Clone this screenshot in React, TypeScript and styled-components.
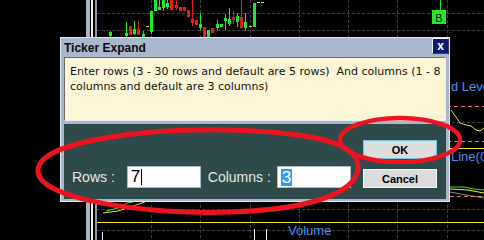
import React from "react";
import styled, { createGlobalStyle } from "styled-components";

const GlobalStyle = createGlobalStyle`
  html, body {
    margin: 0;
    padding: 0;
    background: #000;
  }
  body {
    font-family: "Liberation Sans", Arial, sans-serif;
  }
`;

type Candle = { x: number; top: number; bottom: number; up: boolean; hi?: number; lo?: number };

const candles: Candle[] = [
  { x: 109, top: 32, bottom: 36, up: true, hi: 31, lo: 37 },
  { x: 125, top: 33, bottom: 36, up: true, hi: 22, lo: 37 },
  { x: 129, top: 26, bottom: 35, up: false },
  { x: 133, top: 29, bottom: 34, up: true, hi: 21, lo: 35 },
  { x: 137, top: 29, bottom: 35, up: false, hi: 21 },
  { x: 142, top: 34, bottom: 37, up: true, hi: 31 },
  { x: 150, top: 11, bottom: 32, up: true, lo: 34 },
  { x: 154, top: 0, bottom: 11, up: true },
  { x: 158, top: 7, bottom: 10, up: true, hi: 0 },
  { x: 162, top: 0, bottom: 8, up: true, lo: 11 },
  { x: 166, top: 3, bottom: 7, up: true, hi: 0, lo: 9 },
  { x: 170, top: 0, bottom: 10, up: false },
  { x: 175, top: 5, bottom: 8, up: false, hi: 0, lo: 10 },
  { x: 179, top: 7, bottom: 11, up: false },
  { x: 183, top: 7, bottom: 11, up: false },
  { x: 187, top: 10, bottom: 17, up: false },
  { x: 191, top: 19, bottom: 23, up: false, hi: 0, lo: 26 },
  { x: 195, top: 20, bottom: 25, up: false },
  { x: 199, top: 24, bottom: 28, up: true, hi: 13, lo: 30 },
  { x: 203, top: 27, bottom: 38, up: false },
  { x: 207, top: 30, bottom: 38, up: true },
  { x: 211, top: 28, bottom: 33, up: false },
  { x: 216, top: 24, bottom: 28, up: true, hi: 20, lo: 30 },
  { x: 220, top: 24, bottom: 27, up: true },
  { x: 224, top: 18, bottom: 21, up: true, hi: 14, lo: 30 },
  { x: 228, top: 19, bottom: 24, up: true, hi: 8, lo: 26 },
  { x: 232, top: 17, bottom: 20, up: false, hi: 11, lo: 24 },
  { x: 236, top: 16, bottom: 22, up: true, hi: 13, lo: 27 },
  { x: 240, top: 17, bottom: 28, up: false, hi: 0 },
  { x: 244, top: 22, bottom: 28, up: true, hi: 13, lo: 31 },
  { x: 253, top: 3, bottom: 27, up: true },
];

const yellowTicks = [
  [146, 26],
  [249, 26],
  [257, 2],
  [261, 2],
];

const gridX = [151, 200, 250, 299, 348, 397, 447];
const gridY = [13, 30, 122, 209, 230];

const Screen = styled.div`
  position: relative;
  display: flex;
  width: 484px;
  height: 240px;
  overflow: hidden;
  background: #000;
`;

const SidePane = styled.div`
  flex: none;
  width: 86px;
  background: #000;
`;

const Splitter = styled.div`
  flex: none;
  width: 11px;
  background: linear-gradient(
    to right,
    #a6b2c6 0 4px,
    #000 4px 5px,
    #eef0f4 5px 7px,
    #000 7px 9px,
    #8e98a8 9px 11px
  );
`;

const ChartPane = styled.svg`
  display: block;
  flex: 1;
  height: 240px;
  font-family: "Liberation Sans", Arial, sans-serif;
`;

const Dialog = styled.div`
  position: absolute;
  left: 60px;
  top: 37px;
  width: 390px;
  height: 165px;
  box-sizing: border-box;
  display: flex;
  flex-direction: column;
  padding: 0 3px 2px;
  background: #a9b7cf;
  border: 1px solid #e2e6ee;
`;

const TitleBar = styled.div`
  display: flex;
  justify-content: space-between;
  align-items: flex-start;
  height: 19px;
  flex: none;
`;

const Title = styled.span`
  margin-top: 3px;
  font-size: 12px;
  font-weight: bold;
  color: #0a0a0a;
`;

const CloseButton = styled.div`
  display: flex;
  align-items: center;
  justify-content: center;
  width: 15px;
  height: 14px;
  margin-right: -3px;
  background: #0c1a74;
  border: 1px solid;
  border-color: #f4f6fa #303a70 #303a70 #f4f6fa;
  color: #fff;
  font-size: 12px;
  font-weight: bold;
  line-height: 1;
`;

const Message = styled.div`
  box-sizing: border-box;
  height: 64px;
  flex: none;
  padding: 6px 5px;
  background: #fdf6d6;
  border: 1px solid;
  border-color: #6c6c6c #efefef #efefef #6c6c6c;
  font-family: "DejaVu Sans", Verdana, sans-serif;
  font-size: 11px;
  line-height: 15px;
  white-space: nowrap;
  color: #111;
`;

const ActionPanel = styled.div`
  display: flex;
  align-items: flex-end;
  height: 75px;
  margin-top: 3px;
  box-sizing: border-box;
  padding: 0 9px 11px 8px;
  background: #2f4a4a;
`;

const Fields = styled.div`
  display: flex;
  align-items: center;
  height: 22px;
`;

const Label = styled.span<{ $gap: number }>`
  margin-right: ${(p) => p.$gap}px;
  font-size: 14px;
  color: #e6e8e8;
`;

const Field = styled.div<{ $gap?: number }>`
  display: flex;
  align-items: center;
  box-sizing: border-box;
  width: 74px;
  height: 22px;
  margin-right: ${(p) => p.$gap ?? 0}px;
  padding-left: 3px;
  background: #fff;
  border: 1px solid #a8bcd2;
  font-size: 17px;
  color: #000;
`;

const Caret = styled.span`
  display: inline-block;
  width: 1px;
  height: 16px;
  margin-left: 1px;
  background: #000;
`;

const Selected = styled.span`
  padding: 0 1px;
  line-height: 17px;
  background: #3399ff;
  color: #fff;
`;

const ButtonStack = styled.div`
  display: flex;
  flex-direction: column;
  gap: 10px;
  margin-left: auto;
`;

const Button = styled.div<{ $default?: boolean }>`
  display: flex;
  align-items: center;
  justify-content: center;
  box-sizing: border-box;
  width: 74px;
  height: 19px;
  background: #dcdcdc;
  border: 1px solid ${(p) => (p.$default ? "#74c4ee" : "#f6f6f6")};
  box-shadow: ${(p) => (p.$default ? "inset 0 0 0 1px #c4e4f6" : "none")};
  font-size: 11px;
  font-weight: bold;
  color: #000;
`;

const Markup = styled.svg`
  position: absolute;
  left: 0;
  top: 0;
  pointer-events: none;
`;

function Chart() {
  return (
    <ChartPane viewBox="97 0 387 240" width={387} height={240}>
      {gridY.map((y) => (
        <line key={`h${y}`} x1={97} x2={484} y1={y + 0.5} y2={y + 0.5} stroke="#3c3c3c" strokeDasharray="3 2" />
      ))}
      {gridX.map((x) => (
        <line key={`v${x}`} x1={x + 0.5} x2={x + 0.5} y1={0} y2={240} stroke="#3c3c3c" strokeDasharray="3 2" />
      ))}

      {candles.map((c) => {
        const color = c.up ? "#1ee82a" : "#e81a1a";
        return (
          <g key={c.x} fill={color}>
            {c.hi !== undefined && <rect x={c.x + 1} y={c.hi} width={1} height={c.top - c.hi} />}
            {c.lo !== undefined && <rect x={c.x + 1} y={c.bottom} width={1} height={c.lo - c.bottom} />}
            <rect x={c.x} y={c.top} width={3} height={c.bottom - c.top} />
          </g>
        );
      })}
      <rect x={241} y={0} width={1} height={6} fill="#e81a1a" />
      {yellowTicks.map(([x, y]) => (
        <rect key={`${x}-${y}`} x={x} y={y} width={3} height={1} fill="#f0e020" />
      ))}

      <rect x={440} y={0} width={1} height={10} fill="#1ee82a" />
      <rect x={432} y={10} width={14} height={14} fill="#1ee82a" />
      <text x={439} y={21.5} fontSize={11} textAnchor="middle" fill="#000">
        B
      </text>

      <text x={451} y={91} fontSize={13} fill="#4a90e8">
        d Level
      </text>
      <line x1={97} x2={484} y1={106.5} y2={106.5} stroke="#e07878" strokeDasharray="4 3" />
      <polyline points="451,110 456,117 460,123 466,125 471,126 476,130 480,131 484,128" fill="none" stroke="#e8e020" />
      <line x1={97} x2={484} y1={141.5} y2={141.5} stroke="#e07878" strokeDasharray="4 3" />
      <line x1={97} x2={484} y1={148.5} y2={148.5} stroke="#f0e818" />
      <text x={451} y={161} fontSize={13} fill="#4a90e8">
        Line(0)
      </text>

      <polyline points="450,187 464,187 474,189 484,190" fill="none" stroke="#5ad82a" />
      <polyline points="450,189 468,190 484,193" fill="none" stroke="#e8f020" />
      <polyline points="450,192 466,195 484,198" fill="none" stroke="#8a8a8a" />
      <line x1={450} x2={484} y1={196.5} y2={196.5} stroke="#e07878" strokeDasharray="4 3" />

      <polyline points="103,213 118,211 130,207 145,202" fill="none" stroke="#e8e020" />
      <polyline points="106,211 118,208 127,203 133,202" fill="none" stroke="#5ad82a" />

      <line x1={97} x2={484} y1={222.5} y2={222.5} stroke="#f0e818" />
      <text x={288} y={235} fontSize={13} fill="#4a90e8">
        Volume
      </text>
      <rect x={102} y={232} width={1} height={8} fill="#f0f0f0" />
      <rect x={254} y={229} width={1} height={11} fill="#f0f0f0" />
      <rect x={266} y={229} width={1} height={11} fill="#f0f0f0" />
    </ChartPane>
  );
}

export default function App() {
  return (
    <>
      <GlobalStyle />
      <Screen>
        <SidePane />
        <Splitter />
        <Chart />

        <Dialog>
          <TitleBar>
            <Title>Ticker Expand</Title>
            <CloseButton>x</CloseButton>
          </TitleBar>
          <Message>
            Enter rows (3 - 30 rows and default are 5 rows){"\u00a0 "}And columns (1 - 8
            <br />
            columns and default are 3 columns)
          </Message>
          <ActionPanel>
            <Fields>
              <Label $gap={12}>Rows :</Label>
              <Field $gap={7}>
                7<Caret />
              </Field>
              <Label $gap={6}>Columns :</Label>
              <Field>
                <Selected>3</Selected>
              </Field>
            </Fields>
            <ButtonStack>
              <Button $default>OK</Button>
              <Button>Cancel</Button>
            </ButtonStack>
          </ActionPanel>
        </Dialog>

        <Markup width={484} height={240} viewBox="0 0 484 240">
          <path
            d="M 38 170 C 40 140, 150 128, 230 130 C 300 132, 360 140, 358 168 C 356 196, 300 210, 230 212 C 150 215, 36 200, 38 170 Z"
            fill="none"
            stroke="#ec1420"
            strokeWidth={5}
          />
          <ellipse cx={400} cy={140} rx={60} ry={22} fill="none" stroke="#ec1420" strokeWidth={4.5} />
        </Markup>
      </Screen>
    </>
  );
}
